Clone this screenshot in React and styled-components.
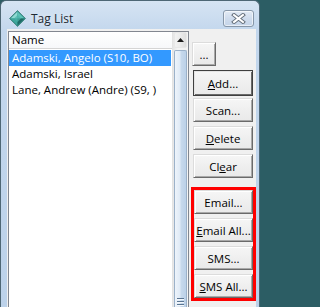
import React from "react";
import styled, { createGlobalStyle } from "styled-components";

const GlobalStyle = createGlobalStyle`
  html, body {
    margin: 0;
    padding: 0;
    overflow: hidden;
    background: #2c5d64;
  }
  * {
    box-sizing: border-box;
  }
`;

const Window = styled.div`
  width: 260px;
  height: 307px;
  display: flex;
  flex-direction: column;
  border: 1px solid #4e6775;
  border-bottom: none;
  border-radius: 6px 6px 0 0;
  background: linear-gradient(180deg, #d6e4f3 0%, #c3d7ed 30px, #bcd2ea 100%);
  font-family: "Open Sans", "Liberation Sans", sans-serif;
  font-size: 11.5px;
  color: #000;
  overflow: hidden;
`;

const TitleBar = styled.div`
  height: 28px;
  flex-shrink: 0;
  display: flex;
  align-items: flex-start;
  padding: 9px 5px 0 8px;
`;

const Title = styled.div`
  flex: 1;
  margin-left: 5px;
  font-size: 12px;
  line-height: 17px;
  color: #1e2a33;
  text-shadow: 0 0 6px rgba(255, 255, 255, 0.9);
`;

const CloseButton = styled.div`
  width: 31px;
  height: 17px;
  display: flex;
  align-items: center;
  justify-content: center;
  border: 1px solid #8797a9;
  border-radius: 3px;
  background: linear-gradient(180deg, #e3ebf5 0%, #cfdced 50%, #c4d4e8 100%);
  box-shadow: inset 0 0 0 1px rgba(255, 255, 255, 0.6);
`;

const Client = styled.div`
  flex: 1;
  display: flex;
  margin: 0 3px 0 6px;
  padding: 2px 0 0 1px;
  background: #f0f0f0;
  min-height: 0;
`;

const ListBox = styled.div`
  width: 182px;
  display: flex;
  border: 1px solid #828790;
  border-bottom: none;
  background: #fff;
`;

const ListBody = styled.div`
  flex: 1;
  display: flex;
  flex-direction: column;
`;

const Header = styled.div`
  height: 17px;
  padding-left: 3px;
  line-height: 16px;
  border-bottom: 1px solid #d5d5d5;
  background: linear-gradient(180deg, #ffffff 0%, #f7f8fa 100%);
  color: #000;
`;

const Rows = styled.div`
  padding-top: 1px;
`;

const Row = styled.div`
  height: 16px;
  line-height: 16px;
  padding-left: 3px;
  white-space: nowrap;
  overflow: hidden;
  background: ${(p) => (p.$selected ? "#3399ff" : "transparent")};
  color: ${(p) => (p.$selected ? "#fff" : "#000")};
  margin-right: 1px;
`;

const ScrollBar = styled.div`
  width: 16px;
  display: flex;
  flex-direction: column;
  border-left: 1px solid #e3e3e3;
  background: linear-gradient(90deg, #e6e6e6 0%, #f4f4f4 30%, #f4f4f4 100%);
`;

const ArrowButton = styled.div`
  height: 17px;
  display: flex;
  align-items: center;
  justify-content: center;
  margin: 0 1px;
  border-radius: 2px;
  background: linear-gradient(90deg, #f2f2f2 0%, #ebebeb 50%, #dedede 100%);
  border: 1px solid #e8e8e8;
`;

const Thumb = styled.div`
  flex: 1;
  margin: 2px 1px 0;
  display: flex;
  flex-direction: column;
  align-items: center;
  padding-top: 247px;
  border: 1px solid #9bb1c9;
  border-bottom: none;
  border-radius: 2px 2px 0 0;
  background: linear-gradient(90deg, #eef4fb 0%, #dfeaf6 45%, #c7d9ec 55%, #bcd1e8 100%);
`;

const GripLine = styled.div`
  width: 7px;
  height: 1px;
  margin-bottom: 2px;
  background: #5a7592;
  box-shadow: 0 1px 0 #f4f8fc;
`;

const Side = styled.div`
  width: 65px;
  margin-left: 2px;
  display: flex;
  flex-direction: column;
  align-items: flex-start;
`;

const Button = styled.div`
  width: ${(p) => p.$w || 60}px;
  height: ${(p) => p.$h || 24}px;
  margin-top: ${(p) => p.$mt || 0}px;
  margin-left: ${(p) => (p.$ml === undefined ? 2 : p.$ml)}px;
  display: flex;
  align-items: center;
  justify-content: center;
  white-space: nowrap;
  font-size: 11.5px;
  color: #000;
  background: linear-gradient(180deg, #f6f6f6 0%, #efefef 50%, #e9e9e9 100%);
  border: 1px solid;
  border-color: #dcdcdc #6a6a6a #6a6a6a #dcdcdc;
  box-shadow: inset 1px 1px 0 #ffffff, inset -1px -1px 0 #a9a9a9;
`;

const DefaultButton = styled(Button)`
  border-color: #3f3f3f;
  box-shadow: inset 1px 1px 0 #e4e4e4, inset -1px -1px 0 #6a6a6a;
`;

const RedBox = styled.div`
  width: 65px;
  margin-top: 9px;
  display: flex;
  flex-direction: column;
  gap: 4px;
  border: 3px solid #ff0000;
`;

const Key = styled.u`
  text-decoration: underline;
  text-underline-offset: 1px;
`;

function AppIcon() {
  return (
    <svg width="17" height="17" viewBox="0 0 17 17">
      <polygon points="8.5,0.5 16.5,8.5 8.5,16.5 0.5,8.5" fill="#2f8f88" stroke="#3d7f7a" strokeWidth="0.8" />
      <polygon points="8.5,1.5 8.5,8.5 1.5,8.5" fill="#8fdad2" />
      <polygon points="8.5,1.5 15.5,8.5 8.5,8.5" fill="#5cc1b6" />
      <polygon points="1.5,8.5 8.5,8.5 8.5,15.5" fill="#3ea79c" />
      <polygon points="15.5,8.5 8.5,15.5 8.5,8.5" fill="#1f6b66" />
      <polygon points="8.5,5 12,8.5 8.5,12 5,8.5" fill="#4cb4aa" opacity="0.7" />
    </svg>
  );
}

function CloseIcon() {
  return (
    <svg width="15" height="11" viewBox="0 0 15 11">
      <path d="M3 2 L12 9 M12 2 L3 9" stroke="#66707c" strokeWidth="4" strokeLinecap="square" />
      <path d="M3 2 L12 9 M12 2 L3 9" stroke="#ffffff" strokeWidth="2" strokeLinecap="square" />
    </svg>
  );
}

function UpArrow() {
  return (
    <svg width="7" height="4" viewBox="0 0 7 4">
      <polygon points="0,4 7,4 3.5,0" fill="#1b1b1b" />
    </svg>
  );
}

const tags = [
  "Adamski, Angelo (S10, BO)",
  "Adamski, Israel",
  "Lane, Andrew (Andre) (S9, )",
];

export default function App() {
  return (
    <>
      <GlobalStyle />
      <Window>
        <TitleBar>
          <AppIcon />
          <Title>Tag List</Title>
          <CloseButton>
            <CloseIcon />
          </CloseButton>
        </TitleBar>
        <Client>
          <ListBox>
            <ListBody>
              <Header>Name</Header>
              <Rows>
                {tags.map((t, i) => (
                  <Row key={t} $selected={i === 0}>
                    {t}
                  </Row>
                ))}
              </Rows>
            </ListBody>
            <ScrollBar>
              <ArrowButton>
                <UpArrow />
              </ArrowButton>
              <Thumb>
                <GripLine />
                <GripLine />
                <GripLine />
              </Thumb>
            </ScrollBar>
          </ListBox>
          <Side>
            <Button $w={24} $ml={1} $mt={11}>...</Button>
            <DefaultButton $h={26} $mt={4}>
              <Key>A</Key>dd...
            </DefaultButton>
            <Button $mt={2}>Scan...</Button>
            <Button $mt={4}>
              <Key>D</Key>elete
            </Button>
            <Button $mt={4}>
              Cl<Key>e</Key>ar
            </Button>
            <RedBox>
              <Button $w={59} $ml={0}>Email...</Button>
              <Button $w={59} $ml={0}>
                <Key>E</Key>mail All...
              </Button>
              <Button $w={59} $ml={0}>SMS...</Button>
              <Button $w={59} $ml={0}>
                <Key>S</Key>MS All...
              </Button>
            </RedBox>
          </Side>
        </Client>
      </Window>
    </>
  );
}
